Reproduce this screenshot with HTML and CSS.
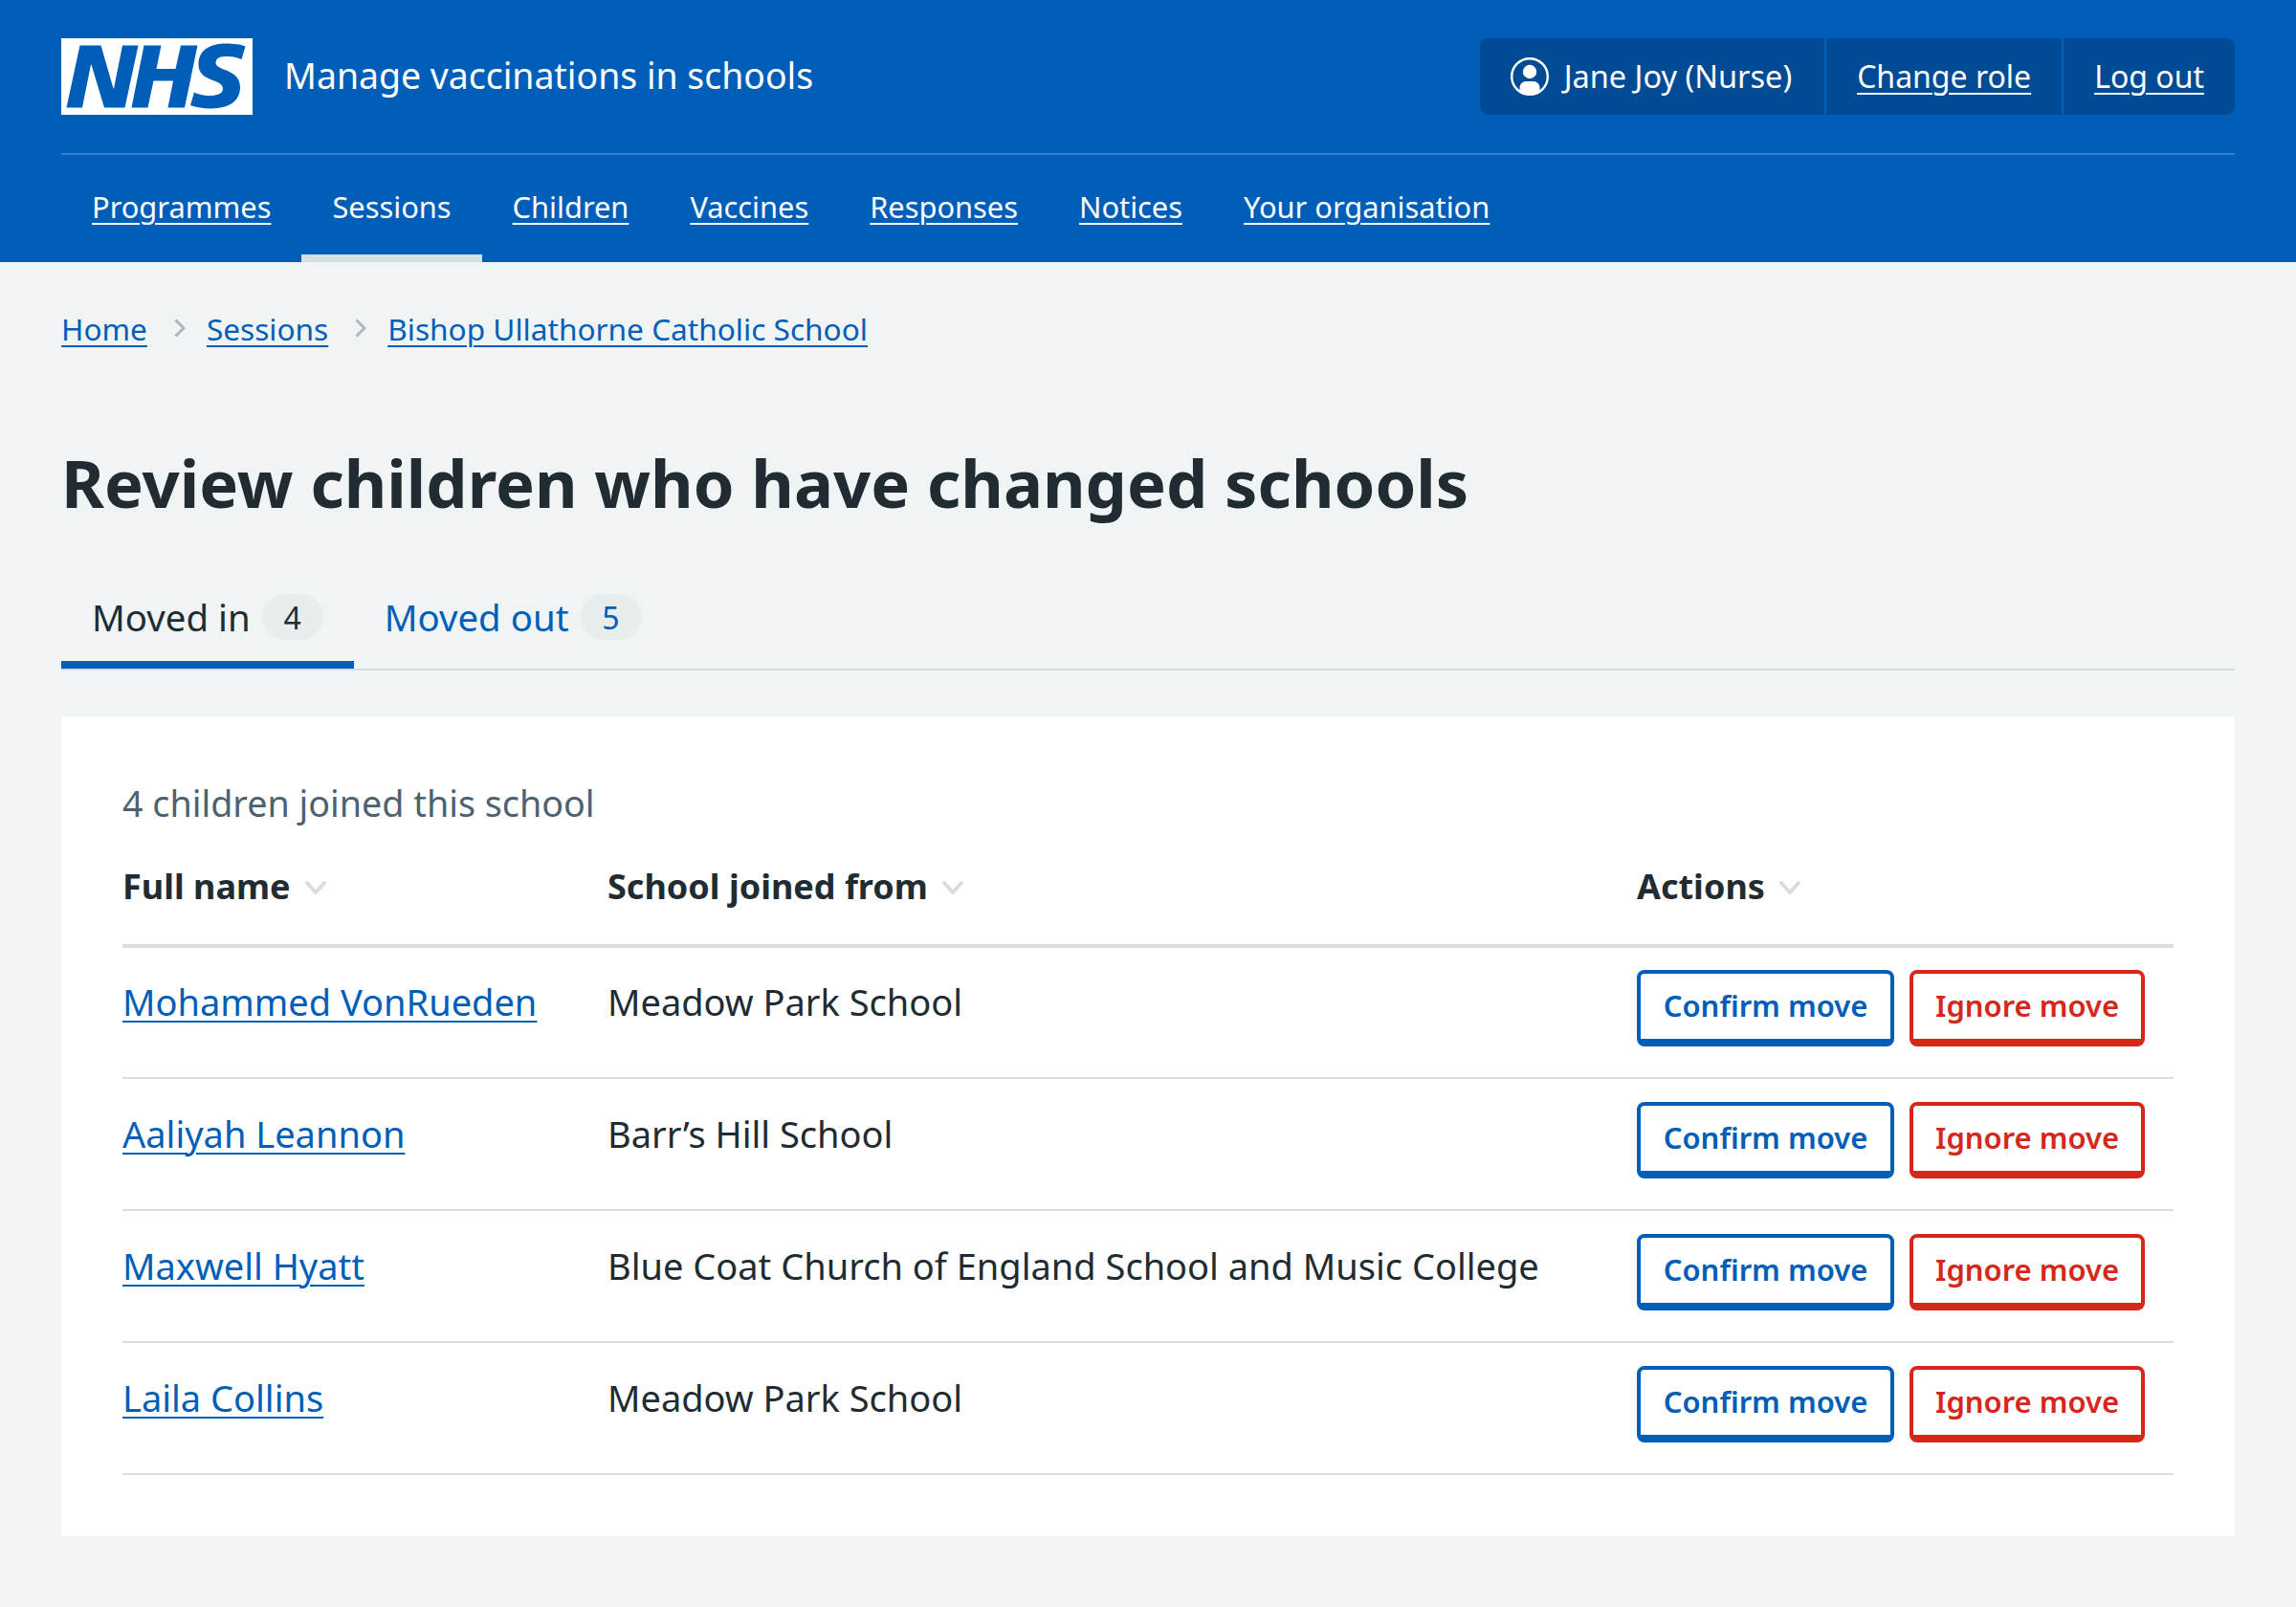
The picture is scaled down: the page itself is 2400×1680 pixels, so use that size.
FILE: index.html
```html
<!DOCTYPE html>
<html lang="en">
<head>
    <title>Review children who have changed schools</title>
    <link rel="stylesheet" href="styles.css">
</head>
<body>
    <header class="header">
        <div class="header-top">
            <a class="logo-link" href="#">
                <svg class="logo" viewBox="0 0 40 16" preserveAspectRatio="none" aria-label="NHS">
                    <path fill="#fff" d="M0 0h40v16H0z"/>
                    <path fill="#005eb8" d="M3.9 1.5h4.4l2.6 9h.1l1.8-9h3.3l-2.8 13H9l-2.7-9h-.1l-1.8 9H1.1M17.3 1.5h3.6l-1 4.9h4L25 1.5h3.5l-2.7 13h-3.5l1.1-5.6h-4.1l-1.2 5.6h-3.4M37.7 4.4c-.7-.3-1.6-.6-2.9-.6-1.4 0-2.5.2-2.5 1.3 0 1.8 5.1 1.2 5.1 5.1 0 3.6-3.3 4.5-6.4 4.5-1.3 0-2.9-.3-4-.7l.8-2.7c.7.4 2.1.7 3.2.7s2.8-.2 2.8-1.5c0-2.1-5.1-1.3-5.1-5 0-3.4 2.9-4.4 5.8-4.4 1.6 0 3.1.2 4 .6"/>
                </svg>
                <span class="service-name">Manage vaccinations in schools</span>
            </a>
            <ul class="account">
                <li class="account-item account-user">
                    <svg class="account-icon" viewBox="0 0 40 40" aria-hidden="true">
                        <circle cx="20" cy="20" r="18.8" fill="none" stroke="#fff" stroke-width="2.4"/>
                        <circle cx="20" cy="15" r="7.2" fill="#fff"/>
                        <path fill="#fff" d="M9.5 36v-4.5a6.5 6.5 0 0 1 6.5-6.5h8a6.500 6.500 0 0 1 6.500 6.500V36A20 20 0 0 1 9.500 36Z"/>
                    </svg>
                    Jane Joy (Nurse)
                </li>
                <li class="account-item"><a href="#">Change role</a></li>
                <li class="account-item"><a href="#">Log out</a></li>
            </ul>
        </div>
        <nav class="nav">
            <a class="nav-item" href="#">Programmes</a>
            <a class="nav-item nav-current" href="#">Sessions</a>
            <a class="nav-item" href="#">Children</a>
            <a class="nav-item" href="#">Vaccines</a>
            <a class="nav-item" href="#">Responses</a>
            <a class="nav-item" href="#">Notices</a>
            <a class="nav-item" href="#">Your organisation</a>
        </nav>
    </header>

    <main class="page">
        <ol class="breadcrumb">
            <li><a href="#">Home</a></li>
            <li class="crumb-sep"><svg viewBox="0 0 12 20" aria-hidden="true"><path d="M1.500 1.500l8.500 8.500-8.500 8.500"/></svg></li>
            <li><a href="#">Sessions</a></li>
            <li class="crumb-sep"><svg viewBox="0 0 12 20" aria-hidden="true"><path d="M1.500 1.500l8.500 8.500-8.500 8.500"/></svg></li>
            <li><a href="#">Bishop Ullathorne Catholic School</a></li>
        </ol>

        <h1 class="title">Review children who have changed schools</h1>

        <div class="tabs">
            <a class="tab tab-current" href="#">Moved in <span class="count">4</span></a>
            <a class="tab" href="#">Moved out <span class="count">5</span></a>
        </div>

        <section class="card">
            <table class="moves">
                <caption>4 children joined this school</caption>
                <thead>
                    <tr>
                        <th class="col-name">Full name <svg class="sort" viewBox="0 0 24 16" aria-hidden="true"><path d="M3 3l9 10 9-10"/></svg></th>
                        <th class="col-school">School joined from <svg class="sort" viewBox="0 0 24 16" aria-hidden="true"><path d="M3 3l9 10 9-10"/></svg></th>
                        <th>Actions <svg class="sort" viewBox="0 0 24 16" aria-hidden="true"><path d="M3 3l9 10 9-10"/></svg></th>
                    </tr>
                </thead>
                <tbody>
                    <tr>
                        <td><a href="#">Mohammed VonRueden</a></td>
                        <td>Meadow Park School</td>
                        <td class="actions"><a class="btn btn-blue" href="#">Confirm move</a><a class="btn btn-red" href="#">Ignore move</a></td>
                    </tr>
                    <tr>
                        <td><a href="#">Aaliyah Leannon</a></td>
                        <td>Barr’s Hill School</td>
                        <td class="actions"><a class="btn btn-blue" href="#">Confirm move</a><a class="btn btn-red" href="#">Ignore move</a></td>
                    </tr>
                    <tr>
                        <td><a href="#">Maxwell Hyatt</a></td>
                        <td>Blue Coat Church of England School and Music College</td>
                        <td class="actions"><a class="btn btn-blue" href="#">Confirm move</a><a class="btn btn-red" href="#">Ignore move</a></td>
                    </tr>
                    <tr>
                        <td><a href="#">Laila Collins</a></td>
                        <td>Meadow Park School</td>
                        <td class="actions"><a class="btn btn-blue" href="#">Confirm move</a><a class="btn btn-red" href="#">Ignore move</a></td>
                    </tr>
                </tbody>
            </table>
        </section>
    </main>
</body>
</html>
```

FILE: styles.css
```css
* {
    box-sizing: border-box;
}
body {
    margin: 0;
    min-height: 1680px;
    background-color: #f0f4f5;
    color: #212b32;
    font-family: "Noto Sans", Arial, sans-serif;
    font-size: 38px;
}
a {
    color: #005eb8;
    text-underline-offset: 5px;
    text-decoration-thickness: 2px;
}
ul, ol {
    list-style: none;
    margin: 0;
    padding: 0;
}

/* header */
.header {
    background-color: #005eb8;
    color: #fff;
    height: 274px;
    padding: 40px 64px 0;
}
.header a {
    color: #fff;
}
.header-top {
    display: flex;
    justify-content: space-between;
    height: 122px;
    padding-bottom: 40px;
    border-bottom: 2px solid #3d7fc5;
}
.logo-link {
    display: flex;
    align-items: center;
    gap: 33px;
    text-decoration: none;
}
.logo {
    width: 200px;
    height: 80px;
}
.service-name {
    padding-bottom: 3px;
    font-size: 37.4px;
}
.account {
    display: flex;
    height: 80px;
    background-color: #004b93;
    border-radius: 8px;
    font-size: 32px;
}
.account-item {
    display: flex;
    align-items: center;
    padding: 0 32px 2px;
    border-left: 2px solid #005eb8;
}
.account-item:first-child {
    border-left: none;
}
.account-user {
    gap: 16px;
    padding-right: 34px;
    font-size: 32.5px;
}
.account-icon {
    width: 40px;
    height: 40px;
    margin-top: 2px;
}
.nav {
    display: flex;
    height: 112px;
}
.nav-item {
    display: flex;
    align-items: center;
    padding: 4px 32px 0;
    font-size: 30.8px;
    border-bottom: 8px solid transparent;
}
.nav-current {
    text-decoration: none;
    border-bottom-color: #d8dde0;
}

/* page */
.page {
    padding: 0 64px;
}
.breadcrumb {
    display: flex;
    align-items: center;
    height: 60px;
    margin-top: 39px;
    font-size: 31.6px;
}
.crumb-sep {
    display: flex;
    width: 62px;
    padding-left: 6px;
    justify-content: center;
}
.crumb-sep svg {
    width: 12px;
    height: 20px;
    fill: none;
    stroke: #aeb7bd;
    stroke-width: 3px;
}
.title {
    margin: 0;
    padding-top: 87px;
    font-size: 68.6px;
    line-height: 90px;
    font-weight: 700;
}

/* tabs */
.tabs {
    display: flex;
    height: 102px;
    margin-top: 49px;
    border-bottom: 2px solid #d8dde0;
}
.tab {
    display: flex;
    align-items: center;
    gap: 12px;
    height: 100px;
    padding: 0 32px;
    font-size: 38.4px;
    text-decoration: none;
    border-bottom: 8px solid transparent;
}
.tab-current {
    color: #212b32;
    border-bottom-color: #005eb8;
}
.count {
    display: inline-flex;
    align-items: center;
    justify-content: center;
    width: 64px;
    height: 48px;
    border-radius: 24px;
    background-color: #e8edee;
    font-size: 32px;
}

/* card and table */
.card {
    background-color: #fff;
    margin-top: 48px;
    padding: 64px;
}
.moves {
    width: 100%;
    border-collapse: collapse;
    table-layout: fixed;
}
.moves caption {
    text-align: left;
    color: #4c6272;
    font-size: 37.7px;
    line-height: 54px;
}
.moves th {
    text-align: left;
    height: 122px;
    padding: 0 0 2px;
    font-size: 36px;
    font-weight: 700;
    color: #212b32;
    border-bottom: 4px solid #d8dde0;
}
.col-name {
    width: 507px;
}
.col-school {
    width: 1076px;
}
.sort {
    width: 24px;
    height: 16px;
    margin-left: 5px;
    vertical-align: 4px;
    fill: none;
    stroke: #d8dde0;
    stroke-width: 4px;
    stroke-linecap: round;
    stroke-linejoin: round;
}
.moves td {
    height: 138px;
    padding: 0 0 23px;
    border-bottom: 2px solid #d8dde0;
}
.moves td.actions {
    padding: 0 0 9px;
    white-space: nowrap;
}
.btn {
    display: inline-block;
    height: 80px;
    border: 4px solid;
    border-bottom-width: 8px;
    border-radius: 8px;
    background-color: #fff;
    font-size: 31px;
    font-weight: 600;
    line-height: 66px;
    text-align: center;
    text-decoration: none;
    vertical-align: middle;
}
.btn-blue {
    width: 269px;
    margin-right: 16px;
    color: #005eb8;
    border-color: #005eb8;
}
.btn-red {
    width: 246px;
    color: #d5281b;
    border-color: #d5281b;
}
```
